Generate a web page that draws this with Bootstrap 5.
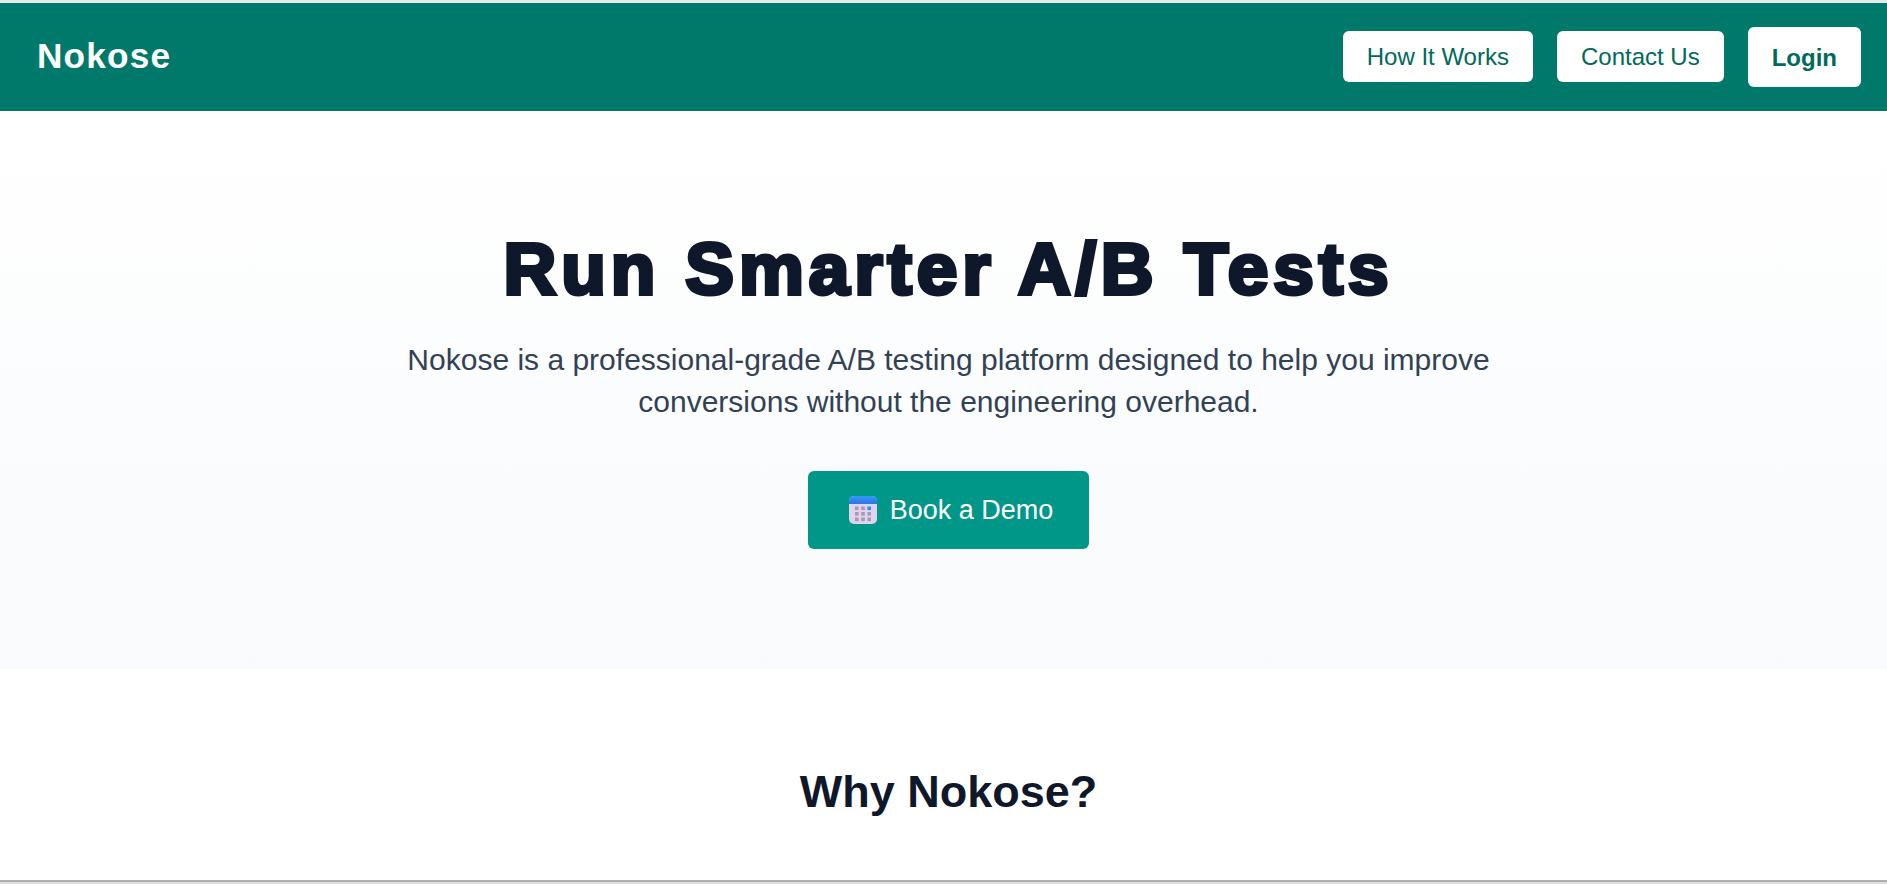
<!DOCTYPE html>
<html lang="en">
<head>
    <meta charset="UTF-8">
    <meta name="viewport" content="width=device-width, initial-scale=1.0">
    <title>Nokose</title>
    <link href="https://cdn.jsdelivr.net/npm/bootstrap@5.3.0/dist/css/bootstrap.min.css" rel="stylesheet">
    <style>
        html, body {
            height: 884px;
            overflow: hidden;
        }
        body {
            font-family: "Liberation Sans", Arial, sans-serif;
            background: #fff;
            color: #0f172a;
            border-top: 3px solid #e3e8e8;
        }
        .top-bar {
            height: 108px;
            background: #00796b;
            padding: 0 26px 1px 37px;
            box-shadow: 0 2px 5px rgba(0, 0, 0, 0.1);
        }
        .brand-name {
            font-size: 35.2px;
            font-weight: 700;
            letter-spacing: 1.2px;
            color: #fff;
        }
        .nav-pill {
            display: block;
            background: #fff;
            color: #00695c;
            font-size: 24px;
            line-height: 33px;
            padding: 9px 24px;
            border-radius: 6px;
            text-decoration: none;
        }
        .nav-pill.login-pill {
            font-weight: 700;
            padding: 14px 24px 13px;
        }
        .hero-band {
            height: 558px;
            background: linear-gradient(to bottom, #fff, #f8fafc);
            padding: 121px 0 0 10px;
        }
        .hero-title {
            font-size: 73px;
            line-height: 1;
            font-weight: 800;
            letter-spacing: 4.9px;
            color: #0f172a;
            -webkit-text-stroke: 4px #0f172a;
            margin-bottom: 34px;
        }
        .hero-text {
            font-size: 30px;
            line-height: 41.6px;
            color: #334155;
            max-width: 1160px;
            margin: 0 auto 49px;
        }
        .demo-btn {
            display: inline-flex;
            align-items: center;
            gap: 13px;
            height: 78px;
            padding: 0 36px 0 41px;
            background: #009688;
            color: #fff;
            font-size: 27px;
            border-radius: 6px;
            text-decoration: none;
        }
        .why-band {
            padding-left: 10px;
        }
        .why-title {
            font-size: 45px;
            font-weight: 700;
            color: #0f172a;
            margin: 0;
            padding-top: 96px;
            line-height: 1.2;
        }
        .window-edge {
            position: fixed;
            left: 0;
            right: 0;
            bottom: 0;
            height: 4px;
            background: #dedede;
            border-top: 2px solid #b0b0b0;
        }
    </style>
</head>
<body>
    <!-- Navbar -->
    <nav class="top-bar d-flex justify-content-between align-items-center">
        <span class="brand-name">Nokose</span>
        <div class="d-flex align-items-center gap-4">
            <a class="nav-pill" href="#">How It Works</a>
            <a class="nav-pill" href="#">Contact Us</a>
            <a class="nav-pill login-pill" href="#">Login</a>
        </div>
    </nav>

    <!-- Hero -->
    <section class="hero-band text-center">
        <h1 class="hero-title">Run Smarter A/B Tests</h1>
        <p class="hero-text">Nokose is a professional-grade A/B testing platform designed to help you improve conversions without the engineering overhead.</p>
        <a class="demo-btn" href="#">
            <svg width="28" height="28" viewBox="0 0 28 28" aria-hidden="true">
                <defs>
                    <linearGradient id="calTop" x1="0" y1="0" x2="0" y2="1">
                        <stop offset="0" stop-color="#2f9bf7"/>
                        <stop offset="1" stop-color="#2f74e6"/>
                    </linearGradient>
                </defs>
                <rect x="0" y="0" width="28" height="28" rx="5" fill="#e0d3ee"/>
                <path d="M0 8V5a5 5 0 0 1 5-5h18a5 5 0 0 1 5 5v3z" fill="url(#calTop)"/>
                <g fill="#a897b5">
                    <rect x="6" y="10.5" width="3.6" height="3.6"/>
                    <rect x="12.2" y="10.5" width="3.6" height="3.6"/>
                    <rect x="6" y="16" width="3.6" height="3.6"/>
                    <rect x="12.2" y="16" width="3.6" height="3.6"/>
                    <rect x="18.4" y="16" width="3.6" height="3.6"/>
                    <rect x="6" y="21.5" width="3.6" height="3.6"/>
                    <rect x="12.2" y="21.5" width="3.6" height="3.6"/>
                    <rect x="18.4" y="21.5" width="3.6" height="3.6"/>
                </g>
                <rect x="18.4" y="10.5" width="3.6" height="3.6" fill="#2f8df5"/>
            </svg>
            <span>Book a Demo</span>
        </a>
    </section>

    <!-- Why -->
    <section class="why-band text-center">
        <h2 class="why-title">Why Nokose?</h2>
    </section>

    <div class="window-edge"></div>
</body>
</html>
